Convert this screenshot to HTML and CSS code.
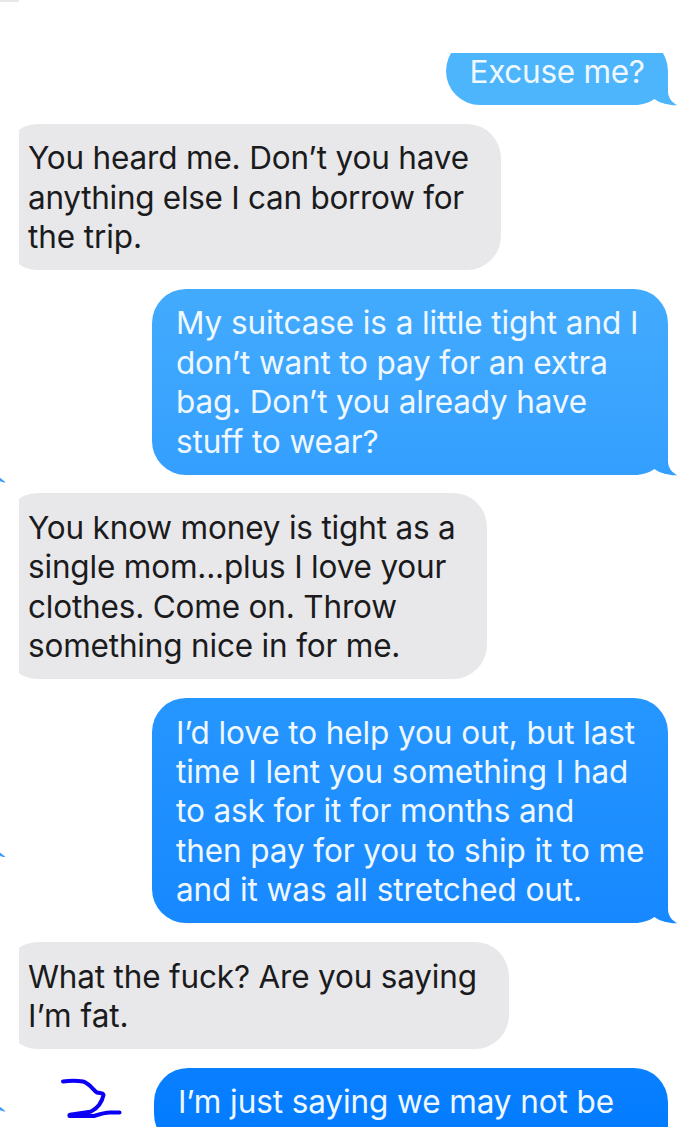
FILE: index.html
```
<!DOCTYPE html>
<html lang="en">
<head>
<meta charset="utf-8">
<title>Messages</title>
<link rel="stylesheet" href="styles.css">
</head>
<body>
<main class="chat">
  <div class="row sent cut">
    <div class="bubble b-first"><p class="tighter">Excuse me?</p>
      <svg class="tail" viewBox="0 0 44 26"><path class="gap" d="M0 26 V25 C9 25 15 22.500 20.500 19 C25 22.500 32 25 44 25 V26 Z"/><path d="M33 0 H34 V11 C34 18 38 22.500 43.500 25.300 C38 25.500 33 24.500 28 22.500 L33 12 Z"/></svg></div>
  </div>
  <div class="row received">
    <div class="bubble w1"><p class="tight">You heard me. Don’t you have</p><p class="tighter">anything else I can borrow for</p><p class="snug">the trip.</p></div>
  </div>
  <div class="row sent">
    <div class="bubble b-second"><p class="snug">My suitcase is a little tight and I</p><p class="tight">don’t want to pay for an extra</p><p class="tight">bag. Don’t you already have</p><p class="snug">stuff to wear?</p>
      <svg class="tail" viewBox="0 0 44 26"><path class="gap" d="M0 26 V25 C9 25 15 22.500 20.500 19 C25 22.500 32 25 44 25 V26 Z"/><path d="M33 0 H34 V11 C34 18 38 22.500 43.500 25.300 C38 25.500 33 24.500 28 22.500 L33 12 Z"/></svg></div>
    <i class="sliver"></i>
  </div>
  <div class="row received">
    <div class="bubble w2"><p class="tight">You know money is tight as a</p><p class="tight">single mom...plus I love your</p><p class="tight">clothes. Come on. Throw</p><p class="tight">something nice in for me.</p></div>
  </div>
  <div class="row sent">
    <div class="bubble b-third"><p class="snug">I’d love to help you out, but last</p><p class="snug">time I lent you something I had</p><p class="snug">to ask for it for months and</p><p class="snug">then pay for you to ship it to me</p><p class="snug">and it was all stretched out.</p>
      <svg class="tail" viewBox="0 0 44 26"><path class="gap" d="M0 26 V25 C9 25 15 22.500 20.500 19 C25 22.500 32 25 44 25 V26 Z"/><path d="M33 0 H34 V11 C34 18 38 22.500 43.500 25.300 C38 25.500 33 24.500 28 22.500 L33 12 Z"/></svg></div>
    <i class="sliver high"></i>
  </div>
  <div class="row received">
    <div class="bubble w3"><p class="tight">What the fuck? Are you saying</p><p>I’m fat.</p></div>
  </div>
  <div class="row sent last">
    <svg class="scribble" viewBox="0 0 64 44"><path d="M4 4.500 C11 3.500 18 3.500 24 4.500 C31 6.500 34 13 38 15.500 C41 16.500 44 15.500 44.500 18 C43 25 39 31 32 34.500 C26 36 17 36.500 10.500 38"/><path d="M10.500 39 H35 C41 37 46 35.500 51 35.500 H60.500"/></svg>
    <div class="bubble b-last"><p class="snug">I’m just saying we may not be</p></div>
    <i class="sliver low"></i>
  </div>
</main>
<i class="edge"></i>
</body>
</html>
```

FILE: styles.css
```
body {
  margin: 0;
  height: 1127px;
  overflow: hidden;
  background: #fff;
  font-family: Inter, "Liberation Sans", sans-serif;
  font-size: 31.5px;
  line-height: 39.4px;
}
.chat {
  display: flex;
  flex-direction: column;
  gap: 18.6px;
  height: 1074px;
  padding-top: 53px;
  overflow: hidden;
}
.row { display: flex; flex: none; position: relative; }
.sent { justify-content: flex-end; padding-right: 32px; }
.received { margin-left: 19px; overflow: hidden; }
.cut { height: 52px; align-items: flex-end; clip-path: inset(0 0 -2px 0); }
.bubble {
  box-sizing: border-box;
  position: relative;
  padding: 14.6px 0 13.8px 24px;
  border-radius: 34px;
}
p { margin: 0; white-space: nowrap; }
.sent .bubble { width: 516px; color: #f0f8ff; border-bottom-right-radius: 0; }
.received .bubble {
  margin-left: -15px;
  color: #1b1b1d;
  background: #e8e8ea;
}
.w1 { width: 497px; }
.w2 { width: 483px; }
.w3 { width: 505px; }
.sent .b-first { width: 222px; padding-left: 23.5px; background: #4db5fc; --tail: #4db5fc; }
.b-second { background: linear-gradient(#43abfd, #349fff); --tail: #349fff; }
.b-third { background: linear-gradient(#2696ff, #1788ff); --tail: #1788ff; }
.sent .b-last { width: 514px; height: 80px; background: linear-gradient(#0a80ff, #007aff); }
.snug { letter-spacing: -.09px; }
.tight { letter-spacing: -.18px; }
.tighter { letter-spacing: -.28px; }
.tail {
  position: absolute;
  right: -10px;
  bottom: -1px;
  width: 44px;
  height: 26px;
  fill: var(--tail);
}
.tail .gap { fill: #fff; }
.last { justify-content: space-between; }
.scribble {
  width: 64px;
  height: 44px;
  margin: 9px 0 0 59px;
  fill: none;
  stroke: #0b00f5;
  stroke-width: 4;
  stroke-linecap: round;
  stroke-linejoin: round;
}
.sliver {
  position: absolute;
  left: 0;
  bottom: -8px;
  width: 5px;
  height: 5px;
  background: #3f9dfb;
  clip-path: polygon(0 0, 100% 80%, 100% 100%, 0 70%);
}
.high { bottom: 66px; }
.low { bottom: 36px; }
.edge {
  position: absolute;
  left: 0;
  top: 0;
  width: 19px;
  height: 2px;
  background: #e8e8ea;
}
```
